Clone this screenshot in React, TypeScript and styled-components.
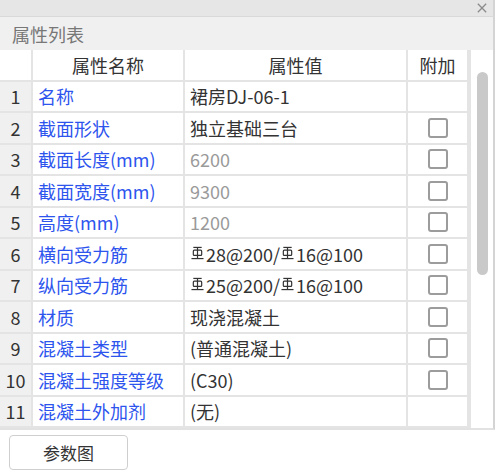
import React from "react";
import styled, {createGlobalStyle} from "styled-components";

const GlobalStyle = createGlobalStyle`
 html, body {
  margin: 0;
  padding: 0;
  background: #fff;
 }
 body {
  font-family: "Noto Sans CJK SC", "Noto Sans", "Liberation Sans", sans-serif;
  color: #333;
 }
`;

type Row = {
 name: string;
 value: React.ReactNode;
 muted?: boolean;
 check?: boolean;
};

// steel grade mark (HRB400), drawn since no font has it
const Rebar = () => (
 <RebarIcon viewBox="0 0 14 15" aria-hidden>
  <line x1="2.5" y1="1.5" x2="11.5" y2="1.5" />
  <rect x="2.5" y="4.5" width="9" height="5.5" rx="1" />
  <line x1="7" y1="1.5" x2="7" y2="13.5" />
  <line x1="0.5" y1="13.5" x2="13.5" y2="13.5" />
 </RebarIcon>
);

const rows: Row[] = [
 {name: "名称", value: "裙房DJ-06-1"},
 {name: "截面形状", value: "独立基础三台", check: true},
 {name: "截面长度(mm)", value: "6200", muted: true, check: true},
 {name: "截面宽度(mm)", value: "9300", muted: true, check: true},
 {name: "高度(mm)", value: "1200", muted: true, check: true},
 {name: "横向受力筋", value: <><Rebar />28@200/<Rebar />16@100</>, check: true},
 {name: "纵向受力筋", value: <><Rebar />25@200/<Rebar />16@100</>, check: true},
 {name: "材质", value: "现浇混凝土", check: true},
 {name: "混凝土类型", value: "(普通混凝土)", check: true},
 {name: "混凝土强度等级", value: "(C30)", check: true},
 {name: "混凝土外加剂", value: "(无)"},
];

const App = () => {
 return (
  <Panel>
   <GlobalStyle />
   <TopBar>
    <CloseBtn viewBox="0 0 12 12" aria-label="close">
     <line x1="1" y1="1" x2="11" y2="11" />
     <line x1="11" y1="1" x2="1" y2="11" />
    </CloseBtn>
   </TopBar>
   <TitleBar>属性列表</TitleBar>
   <TableWrap>
    <Grid>
     <NumCell head />
     <HeadCell>属性名称</HeadCell>
     <HeadCell>属性值</HeadCell>
     <HeadCell>附加</HeadCell>
     {rows.map((r, i) => (
      <React.Fragment key={r.name}>
       <NumCell>{i + 1}</NumCell>
       <NameCell>{r.name}</NameCell>
       <ValueCell muted={r.muted}>{r.value}</ValueCell>
       <AddCell>{r.check && <Check />}</AddCell>
      </React.Fragment>
     ))}
    </Grid>
    <Track>
     <Thumb />
    </Track>
   </TableWrap>
   <Footer>
    <Button>参数图</Button>
   </Footer>
  </Panel>
 );
};

export default App;

const Panel = styled.div`
 width: 495px;
 height: 476px;
 display: flex;
 flex-direction: column;
 font-size: 18px;
`;

const TopBar = styled.div`
 height: 16px;
 background: #e6e6e6;
 border-bottom: 1px solid #d9d9d9;
 border-right: 2px solid #d4d4d4;
 display: flex;
 align-items: center;
 justify-content: flex-end;
 padding-right: 6px;
`;

const CloseBtn = styled.svg`
 width: 10px;
 height: 10px;
 stroke: #8c8c8c;
 stroke-width: 1.6;
`;

const TitleBar = styled.div`
 height: 33px;
 background: #f0f0f0;
 border-right: 2px solid #d4d4d4;
 color: #777;
 font-size: 18px;
 display: flex;
 align-items: center;
 padding-left: 12px;
`;

const TableWrap = styled.div`
 display: flex;
 border-bottom: 2px solid #e2e2e2;
 border-right: 2px solid #d4d4d4;
`;

const Grid = styled.div`
 display: grid;
 grid-template-columns: 33px 152px 223px 61px;
 grid-template-rows: 31.5px;
 grid-auto-rows: 31.5px;
`;

const Cell = styled.div`
 box-sizing: border-box;
 border-right: 2px solid #e4e4e4;
 border-bottom: 2px solid #e4e4e4;
 display: flex;
 align-items: center;
 white-space: nowrap;
 overflow: hidden;
`;

const NumCell = styled(Cell)<{head?: boolean}>`
 background: ${({head}) => (head ? "#fff" : "#f0f0f0")};
 justify-content: center;
 color: #333;
`;

const HeadCell = styled(Cell)`
 justify-content: center;
 color: #333;
`;

const NameCell = styled(Cell)`
 padding-left: 5px;
 color: #2d55ee;
`;

const ValueCell = styled(Cell)<{muted?: boolean}>`
 padding-left: 5px;
 color: ${({muted}) => (muted ? "#9a9a9a" : "#333")};
`;

const AddCell = styled(Cell)`
 justify-content: center;
`;

const Check = styled.span`
 box-sizing: border-box;
 width: 20px;
 height: 20px;
 border: 2px solid #9c9c9c;
 border-radius: 3px;
 background: #fff;
`;

const RebarIcon = styled.svg`
 width: 13px;
 height: 14px;
 margin: 0 2px 2px 1px;
 fill: none;
 stroke: #333;
 stroke-width: 1.3;
`;

const Track = styled.div`
 flex: 1;
 border-left: 2px solid #e4e4e4;
 display: flex;
 justify-content: center;
 padding-top: 22px;
`;

const Thumb = styled.div`
 width: 11px;
 height: 203px;
 border-radius: 6px;
 background: #c9c9c9;
`;

const Footer = styled.div`
 padding: 5px 9px;
`;

const Button = styled.button`
 width: 119px;
 height: 35px;
 background: #fff;
 border: 1px solid #cfcfcf;
 border-radius: 4px;
 font-family: inherit;
 font-size: 17px;
 color: #333;
 cursor: pointer;
`;
